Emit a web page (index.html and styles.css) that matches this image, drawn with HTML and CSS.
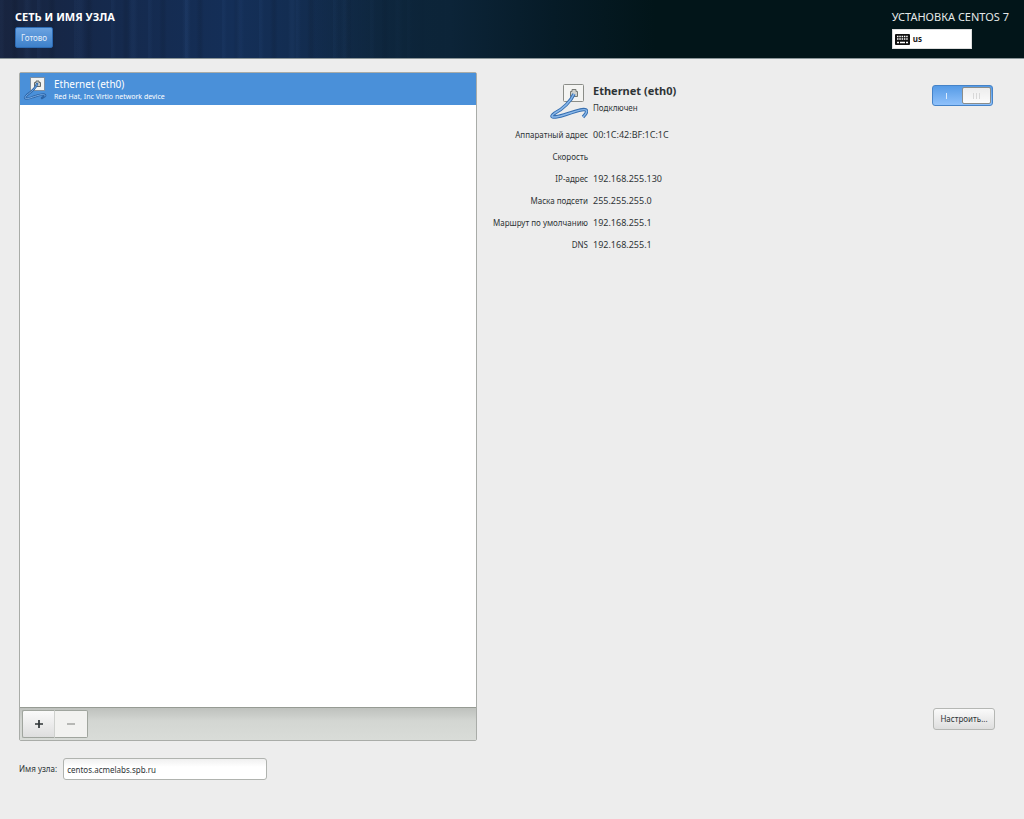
FILE: index.html
```html
<!DOCTYPE html>
<html lang="ru">
<head>
    <meta charset="UTF-8">
    <meta name="viewport" content="width=device-width, initial-scale=1.0">
    <title>Сеть и имя узла</title>
    <link rel="stylesheet" href="styles.css">
</head>
<body>
    <header class="header">
        <div class="header-left">
            <h1>СЕТЬ И ИМЯ УЗЛА</h1>
            <button type="button" class="done-btn">Готово</button>
        </div>
        <div class="header-right">
            <div class="product">УСТАНОВКА CENTOS 7</div>
            <button type="button" class="layout-btn">
                <svg width="15" height="11" viewBox="0 0 15 11" aria-hidden="true">
                    <rect width="15" height="11" rx="1" fill="#111"/>
                    <path d="M2 2.500h11M2 5h11" stroke="#fff" stroke-width="1.400" stroke-dasharray="1.500 0.800"/>
                    <path d="M2 8.500h2M5 8.500h5M11 8.500h2" stroke="#fff" stroke-width="1.400"/>
                </svg>
                us
            </button>
        </div>
    </header>

    <main class="main">
        <section class="devices">
            <ul class="device-list">
                <li class="device selected">
                    <svg class="device-icon" viewBox="0 0 24 24" aria-hidden="true">
                        <rect x="7.500" y="1.500" width="14" height="13" fill="#f2f3f1" stroke="#7d8fa3"/>
                        <path d="M11.500 10.500V6.500H13V5h3v1.500h1.500v4z" fill="#c9cdca" stroke="#666a68"/>
                        <path d="M14 8C13 12 8 16 4 19C-1 24 5 23 10 21C16 19 23 17 22 20L19 22" fill="none" stroke="#2c64a6" stroke-width="2.400" stroke-linecap="round"/>
                        <path d="M14 8C13 12 8 16 4 19C-1 24 5 23 10 21C16 19 23 17 22 20" fill="none" stroke="#74a8e2" stroke-width="1" stroke-linecap="round"/>
                    </svg>
                    <div>
                        <div class="device-name">Ethernet (eth0)</div>
                        <div class="device-desc">Red Hat, Inc Virtio network device</div>
                    </div>
                </li>
            </ul>
            <div class="toolbar">
                <button type="button" class="tool-btn" aria-label="Добавить">
                    <svg width="10" height="10" viewBox="0 0 10 10"><path d="M1 5h8M5 1v8" stroke="#2e3436" stroke-width="1.700"/></svg>
                </button>
                <button type="button" class="tool-btn" aria-label="Удалить" disabled>
                    <svg width="10" height="10" viewBox="0 0 10 10"><path d="M1 5h8" stroke="#a3a5a2" stroke-width="1.500"/></svg>
                </button>
            </div>
        </section>

        <section class="details">
            <div class="details-head">
                <svg class="details-icon" viewBox="0 0 38 36" aria-hidden="true">
                    <rect x="13.500" y="0.500" width="20" height="17" rx="1" fill="#f4f4f2" stroke="#8b8d88"/>
                    <path d="M20.500 12.500V7.500H22V5.500h4v2h1.500v5z" fill="#d0d2ce" stroke="#777a75"/>
                    <path d="M24 10C21 17 13 25 5 29C-2 34 4 34 14 31C24 28 33 24 36 26C38 28 35 31 33 33" fill="none" stroke="#376fb0" stroke-width="3.400"/>
                    <path d="M24 10C21 17 13 25 5 29C-2 34 4 34 14 31C24 28 33 24 36 26C38 28 35 31 33 33" fill="none" stroke="#8ab8ea" stroke-width="1.500"/>
                </svg>
                <div class="details-title">
                    <h2>Ethernet (eth0)</h2>
                    <p>Подключен</p>
                </div>
                <label class="switch">
                    <input type="checkbox" aria-label="Ethernet (eth0)" checked>
                    <span class="switch-on"></span>
                    <span class="switch-knob"><i></i><i></i><i></i></span>
                </label>
            </div>
            <dl class="info">
                <dt>Аппаратный адрес</dt><dd>00:1C:42:BF:1C:1C</dd>
                <dt>Скорость</dt><dd></dd>
                <dt>IP-адрес</dt><dd>192.168.255.130</dd>
                <dt>Маска подсети</dt><dd>255.255.255.0</dd>
                <dt>Маршрут по умолчанию</dt><dd>192.168.255.1</dd>
                <dt>DNS</dt><dd>192.168.255.1</dd>
            </dl>
            <button type="button" class="config-btn">Настроить...</button>
        </section>
    </main>

    <footer class="hostname">
        <label for="hostname">Имя узла:</label>
        <input type="text" id="hostname" value="centos.acmelabs.spb.ru">
    </footer>
</body>
</html>
```
FILE: styles.css
```css
* {
    box-sizing: border-box;
}

body {
    margin: 0;
    min-height: 100vh;
    display: flex;
    flex-direction: column;
    background-color: #ededed;
    color: #2e3436;
    font-family: "Noto Sans", "Open Sans", sans-serif;
    font-size: 8px;
    line-height: 12px;
}

h1, h2, p, ul, dl, dd {
    margin: 0;
    padding: 0;
}

button, input {
    font: inherit;
    color: inherit;
}

/* Header */
.header {
    display: flex;
    justify-content: space-between;
    height: 59px;
    padding: 10px 15px 0;
    border-bottom: 1px solid #8a9598;
    color: white;
    background:
        linear-gradient(90deg, transparent 30%, #0c2438 44%, #061b27 54%, #021519 64%),
        repeating-linear-gradient(90deg, rgba(80,130,200,0.05) 0 2px, transparent 5px 11px, rgba(0,0,0,0.08) 14px 16px, transparent 19px 37px),
        repeating-linear-gradient(90deg, transparent 0 23px, rgba(80,130,200,0.06) 26px 28px, transparent 32px 53px),
        linear-gradient(90deg, #18243f 0%, #15294c 10%, #142f58 23%, #122b4b 34%, #0c2438 44%);
}

h1 {
    margin-bottom: 3px;
    font-size: 11px;
    line-height: 14px;
}

.done-btn {
    display: block;
    height: 21px;
    padding: 0 5px;
    border: 1px solid #2d6bb3;
    border-radius: 2px;
    background: linear-gradient(#6ba3e1, #3d80ca);
    color: #e4effb;
}

.product {
    margin-bottom: 5px;
    font-size: 11px;
    line-height: 14px;
    color: #e4e8e8;
}

.layout-btn {
    display: flex;
    align-items: center;
    gap: 3px;
    width: 80px;
    height: 20px;
    padding: 0 2px;
    border: 1px solid #ddd;
    background-color: white;
    color: #1a1a1a;
    font-weight: bold;
}

/* Content */
.main {
    flex: 1;
    display: grid;
    grid-template-columns: 458fr 528fr;
    padding: 13px 19px 0;
}

.devices {
    display: flex;
    flex-direction: column;
    border: 1px solid #a9aca8;
    border-radius: 2px;
}

.device-list {
    flex: 1;
    list-style: none;
    background-color: white;
}

.device {
    display: flex;
    gap: 7px;
    height: 32px;
    padding: 3px;
}

.device.selected {
    background-color: #4a90d9;
    color: white;
}

.device-icon {
    width: 24px;
    height: 24px;
}

.device-name {
    margin-top: 1px;
    font-size: 10px;
    line-height: 14px;
}

.device-desc {
    font-size: 7px;
    line-height: 12px;
}

.toolbar {
    display: flex;
    height: 33px;
    padding: 2px;
    border-top: 1px solid #969b94;
    background: linear-gradient(#bec1bd, #d3d6d2 40%, #d9dcd8);
}

.tool-btn {
    display: flex;
    align-items: center;
    justify-content: center;
    width: 33px;
    height: 28px;
    border: 1px solid #a0a59e;
    border-right-color: #cfd1ce;
    border-radius: 2px 0 0 2px;
    background: linear-gradient(#fafafa, #dedede);
}

.tool-btn + .tool-btn {
    border-left: none;
    border-right-color: #a0a59e;
    border-radius: 0 2px 2px 0;
}

.tool-btn:disabled {
    background: #f2f2f0;
}

/* Details */
.details {
    display: flex;
    flex-direction: column;
    padding: 12px 10px 11px 5px;
}

.details-head {
    display: flex;
    gap: 5px;
    padding-right: 2px;
}

.details-icon {
    width: 38px;
    height: 36px;
    margin-left: 68px;
}

.details-title {
    flex: 1;
}

h2 {
    margin-bottom: 4px;
    font-size: 11px;
    line-height: 14px;
}

.switch {
    position: relative;
    display: flex;
    width: 61px;
    height: 21px;
    margin-top: 1px;
    border: 1px solid #4583c8;
    border-radius: 3px;
    background: linear-gradient(#569be6, #8fc1fb);
}

.switch input {
    position: absolute;
    inset: 0;
    margin: 0;
    opacity: 0;
}

.switch-on,
.switch-knob {
    flex: 1;
    display: flex;
    align-items: center;
    justify-content: center;
}

.switch-on::before {
    content: "";
    width: 1px;
    height: 6px;
    background-color: #dcebfc;
}

.switch-knob {
    gap: 2px;
    margin: 1px;
    border: 1px solid #8b8d8a;
    border-radius: 2px;
    background: linear-gradient(#ededed, #fbfbfb);
}

.switch-knob i {
    width: 1px;
    height: 6px;
    background-color: #d8d8d8;
}

.info {
    display: grid;
    grid-template-columns: 106px 1fr;
    column-gap: 5px;
    row-gap: 2px;
    margin-top: 5px;
    line-height: 20px;
}

.info dt {
    text-align: right;
}

.info dd {
    font-size: 9px;
}

.config-btn {
    align-self: flex-end;
    width: 62px;
    height: 22px;
    margin-top: auto;
    padding: 0;
    border: 1px solid #b5b7b4;
    border-radius: 3px;
    background: linear-gradient(#fafafa, #dedede);
}

/* Hostname */
.hostname {
    display: flex;
    align-items: center;
    gap: 6px;
    padding: 17px 19px 39px;
}

.hostname input {
    width: 204px;
    height: 22px;
    padding: 0 3px;
    border: 1px solid #b0b3af;
    border-radius: 3px;
    background: linear-gradient(#f0f0f0, #fff 40%);
}
```
